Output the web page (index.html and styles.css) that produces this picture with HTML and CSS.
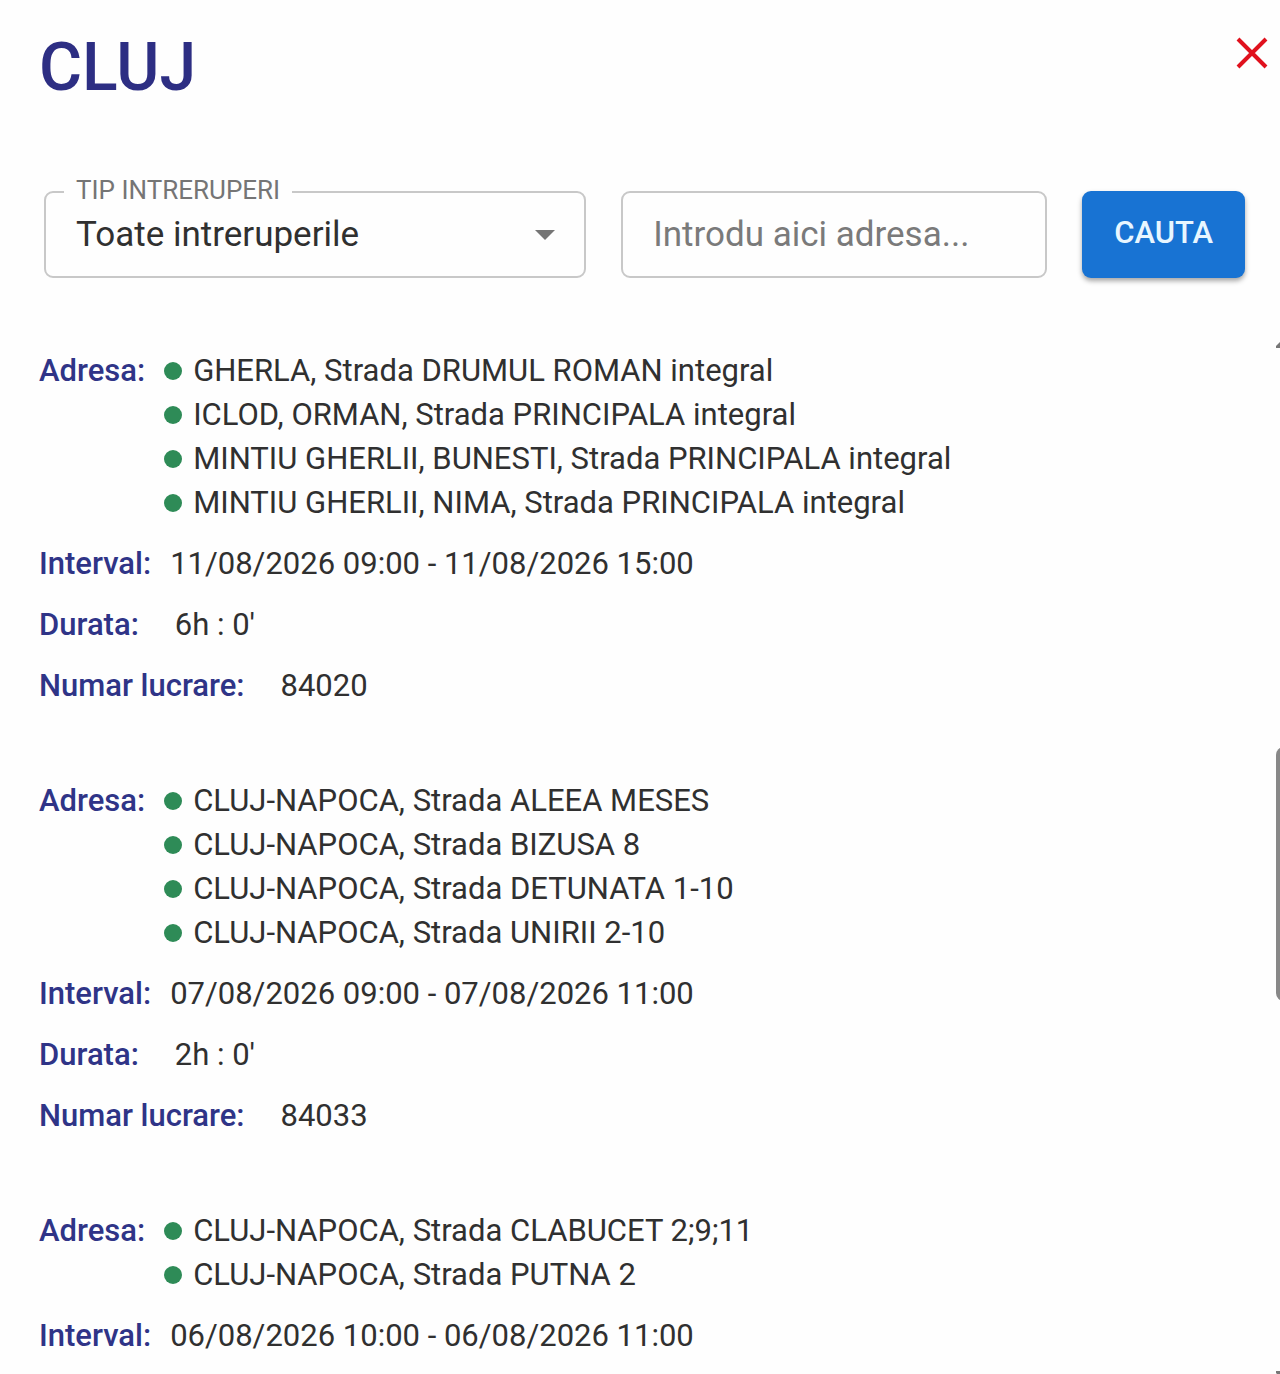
FILE: index.html
```html
<!DOCTYPE html>
<html lang="ro">
<head>
    <meta charset="UTF-8">
    <meta name="viewport" content="width=device-width, initial-scale=1.0">
    <title>Cluj</title>
    <link rel="stylesheet" href="styles.css">
</head>
<body>

    <div class="dialog">
        <header class="header">
            <h1>CLUJ</h1>
            <button type="button" class="close-btn" aria-label="Inchide">
                <svg viewBox="0 0 32 32" width="32" height="32" aria-hidden="true">
                    <path d="M2 2L30 30M30 2L2 30" stroke="#e0111d" stroke-width="4" fill="none"/>
                </svg>
            </button>
        </header>

        <!-- Filtre -->
        <form class="filters">
            <div class="field">
                <label for="tip">TIP INTRERUPERI</label>
                <select id="tip">
                    <option>Toate intreruperile</option>
                </select>
                <svg class="arrow" viewBox="0 0 20 10" width="20" height="10" aria-hidden="true">
                    <path d="M0 0h20L10 10z" fill="#757575"/>
                </svg>
            </div>
            <div class="field">
                <input type="text" id="adresa" placeholder="Introdu aici adresa..." aria-label="Adresa">
            </div>
            <button type="submit" class="search-btn">CAUTA</button>
        </form>

        <!-- Lista de intreruperi -->
        <main class="list">
            <dl class="record">
                <div class="row">
                    <dt>Adresa:</dt>
                    <dd>
                        <ul>
                            <li>GHERLA, Strada DRUMUL ROMAN integral</li>
                            <li>ICLOD, ORMAN, Strada PRINCIPALA integral</li>
                            <li>MINTIU GHERLII, BUNESTI, Strada PRINCIPALA integral</li>
                            <li>MINTIU GHERLII, NIMA, Strada PRINCIPALA integral</li>
                        </ul>
                    </dd>
                </div>
                <div class="row">
                    <dt>Interval:</dt>
                    <dd>11/08/2026 09:00 - 11/08/2026 15:00</dd>
                </div>
                <div class="row wide">
                    <dt>Durata:</dt>
                    <dd>6h : 0'</dd>
                </div>
                <div class="row wide">
                    <dt>Numar lucrare:</dt>
                    <dd>84020</dd>
                </div>
            </dl>

            <dl class="record">
                <div class="row">
                    <dt>Adresa:</dt>
                    <dd>
                        <ul>
                            <li>CLUJ-NAPOCA, Strada ALEEA MESES</li>
                            <li>CLUJ-NAPOCA, Strada BIZUSA 8</li>
                            <li>CLUJ-NAPOCA, Strada DETUNATA 1-10</li>
                            <li>CLUJ-NAPOCA, Strada UNIRII 2-10</li>
                        </ul>
                    </dd>
                </div>
                <div class="row">
                    <dt>Interval:</dt>
                    <dd>07/08/2026 09:00 - 07/08/2026 11:00</dd>
                </div>
                <div class="row wide">
                    <dt>Durata:</dt>
                    <dd>2h : 0'</dd>
                </div>
                <div class="row wide">
                    <dt>Numar lucrare:</dt>
                    <dd>84033</dd>
                </div>
            </dl>

            <dl class="record">
                <div class="row">
                    <dt>Adresa:</dt>
                    <dd>
                        <ul>
                            <li>CLUJ-NAPOCA, Strada CLABUCET 2;9;11</li>
                            <li>CLUJ-NAPOCA, Strada PUTNA 2</li>
                        </ul>
                    </dd>
                </div>
                <div class="row">
                    <dt>Interval:</dt>
                    <dd>06/08/2026 10:00 - 06/08/2026 11:00</dd>
                </div>
            </dl>

            <!-- Bara de derulare -->
            <div class="scrollbar">
                <span class="scroll-up"></span>
                <span class="thumb"></span>
                <span class="scroll-down"></span>
            </div>
        </main>
    </div>

</body>
</html>
```
FILE: styles.css
```css
* {
    box-sizing: border-box;
}
body {
    margin: 0;
    font-family: Roboto, Arial, sans-serif;
    font-size: 31px;
    line-height: 44px;
    color: #303030;
    background-color: #fefefe;
}
.dialog {
    display: flex;
    flex-direction: column;
    height: 100vh;
    overflow: hidden;
}
.header {
    display: flex;
    justify-content: space-between;
    align-items: flex-start;
    padding: 28px 12px 0 39px;
}
h1 {
    margin: 0;
    font-size: 66px;
    line-height: 80px;
    font-weight: 500;
    color: #2d2e83;
}
button {
    border: 0;
    font-family: inherit;
    cursor: pointer;
}
.close-btn {
    display: flex;
    margin-top: 9px;
    padding: 0;
    background: none;
}
.filters {
    display: grid;
    grid-template-columns: 56fr 44fr auto;
    gap: 35px;
    padding: 83px 35px 0 44px;
}
.field {
    position: relative;
}
.field label {
    position: absolute;
    top: -16px;
    left: 20px;
    padding: 0 12px;
    font-size: 26px;
    line-height: 30px;
    color: #757575;
    background-color: #fefefe;
}
.field select,
.field input {
    display: block;
    width: 100%;
    height: 87px;
    padding: 0 30px;
    border: 2px solid #c8c8c8;
    border-radius: 9px;
    font-family: inherit;
    font-size: 35px;
    color: #303030;
    background-color: transparent;
    appearance: none;
}
.field input::placeholder {
    color: #7a7a7a;
    opacity: 1;
}
.arrow {
    position: absolute;
    top: 39px;
    right: 31px;
    pointer-events: none;
}
.search-btn {
    height: 87px;
    padding: 0 32px 4px;
    border-radius: 9px;
    font-size: 31px;
    font-weight: 500;
    color: #e8f6ff;
    background-color: #1873d3;
    box-shadow: 0 3px 5px rgba(0, 0, 0, 0.35);
}
.list {
    position: relative;
    flex: 1;
    min-height: 0;
    margin-top: 61px;
    padding: 10px 39px 0;
}
.record {
    display: flex;
    flex-direction: column;
    gap: 17px;
    margin: 0 0 71px;
}
.row {
    display: flex;
    gap: 19px;
}
.row.wide {
    gap: 36px;
}
dt {
    font-weight: 500;
    color: #2f3487;
}
dd {
    margin: 0;
}
ul {
    margin: 0;
    padding: 0;
    list-style: none;
}
li {
    display: flex;
    align-items: center;
    gap: 11px;
}
li::before {
    content: "";
    width: 18px;
    height: 18px;
    border-radius: 50%;
    background-color: #2e8b57;
}
.scrollbar {
    position: absolute;
    top: 0;
    right: 0;
    bottom: 0;
    width: 4px;
    overflow: hidden;
}
.thumb {
    position: absolute;
    top: 395px;
    top: calc(39% + 4px);
    left: 0;
    width: 16px;
    height: 254px;
    border-radius: 8px;
    background-color: #888;
}
.scroll-up,
.scroll-down {
    position: absolute;
    left: -2px;
    width: 16px;
    height: 8px;
    background-color: #777;
}
.scroll-up {
    top: 1px;
    clip-path: polygon(50% 0, 100% 100%, 0 100%);
}
.scroll-down {
    bottom: -5px;
    clip-path: polygon(0 0, 100% 0, 50% 100%);
}
```
